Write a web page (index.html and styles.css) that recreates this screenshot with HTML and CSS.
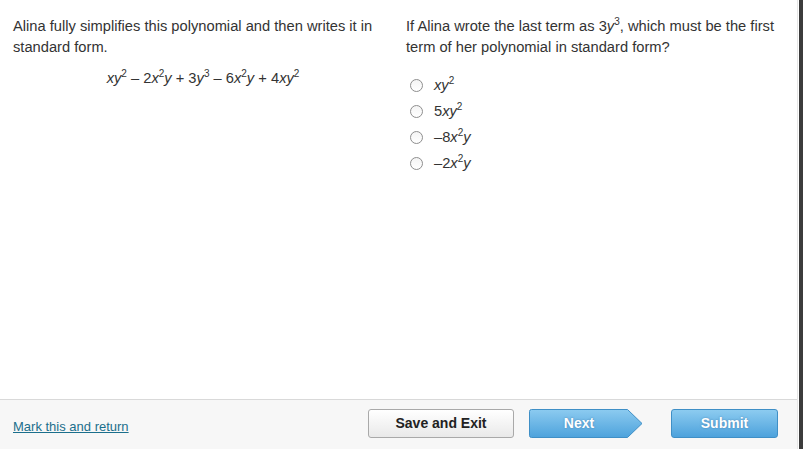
FILE: index.html
```html
<!DOCTYPE html>
<html>
<head>
<meta charset="utf-8">
<link rel="stylesheet" href="styles.css">
</head>
<body>
<div class="frame">
  <div class="page">
    <main class="content">
      <section class="col col-left">
        <p class="prompt">Alina fully simplifies this polynomial and then writes it in standard form.</p>
        <p class="formula"><i>xy</i><sup>2</sup> – 2<i>x</i><sup>2</sup><i>y</i> + 3<i>y</i><sup>3</sup> – 6<i>x</i><sup>2</sup><i>y</i> + 4<i>xy</i><sup>2</sup></p>
      </section>
      <section class="col col-right">
        <p class="prompt">If Alina wrote the last term as 3<i>y</i><sup>3</sup>, which must be the first term of her polynomial in standard form?</p>
        <ul class="choices">
          <li class="choice"><span class="radio"></span><span class="label"><i>xy</i><sup>2</sup></span></li>
          <li class="choice"><span class="radio"></span><span class="label">5<i>xy</i><sup>2</sup></span></li>
          <li class="choice"><span class="radio"></span><span class="label">–8<i>x</i><sup>2</sup><i>y</i></span></li>
          <li class="choice"><span class="radio"></span><span class="label">–2<i>x</i><sup>2</sup><i>y</i></span></li>
        </ul>
      </section>
    </main>
    <footer class="footer">
      <a class="mark" href="#">Mark this and return</a>
      <div class="actions">
        <button class="btn btn-save">Save and Exit</button>
        <button class="btn-next">
          <svg class="next-shape" width="114" height="29" viewBox="0 0 114 29">
            <defs>
              <linearGradient id="ng" x1="0" y1="0" x2="0" y2="1">
                <stop offset="0" stop-color="#8ccbf0"/>
                <stop offset="1" stop-color="#4da2dc"/>
              </linearGradient>
            </defs>
            <path d="M2.5 0.5 H98.5 L113 14.5 L98.5 28.5 H2.5 Q0.5 28.5 0.5 26.5 V2.5 Q0.5 0.5 2.5 0.5 Z" fill="url(#ng)" stroke="#3f8fc6" stroke-width="1"/>
          </svg>
          <span class="next-text">Next</span>
        </button>
        <button class="btn btn-submit">Submit</button>
      </div>
    </footer>
  </div>
  <div class="edge"></div>
</div>
</body>
</html>
```
FILE: styles.css
```css
html, body {
  margin: 0;
  padding: 0;
  background: #ffffff;
}
body {
  font-family: "Liberation Sans", Arial, sans-serif;
  color: #333333;
  width: 803px;
  height: 449px;
  overflow: hidden;
}
.frame {
  display: flex;
  height: 449px;
}
.page {
  flex: 1;
  display: flex;
  flex-direction: column;
  border-right: 1px solid #e6e6e6;
  margin-right: 1px;
}
.edge {
  width: 4px;
  background: #3c3c3c;
}
.content {
  flex: 1;
  display: flex;
}
.col {
  padding-top: 16px;
}
.col-left {
  width: 380px;
  padding-left: 13px;
}
.col-right {
  padding-left: 13px;
  flex: 1;
}
.prompt {
  margin: 0;
  font-size: 14.7px;
  line-height: 21px;
}
sup {
  font-size: 10px;
  line-height: 0;
  vertical-align: 6px;
}
.formula {
  margin: 10px 0 0;
  font-size: 14.7px;
  line-height: 21px;
  text-align: center;
}
.choices {
  list-style: none;
  margin: 14px 0 0;
  padding: 0 0 0 4px;
}
.choice {
  display: flex;
  align-items: center;
  height: 26px;
  font-size: 14.7px;
}
.radio {
  width: 11px;
  height: 11px;
  border: 1px solid #8e8e8e;
  border-radius: 50%;
  background: linear-gradient(#f4f4f4, #ffffff);
  margin-right: 11px;
  flex: none;
}
.footer {
  height: 49px;
  border-top: 1px solid #d9d9d9;
  background: #f7f7f7;
  display: flex;
  align-items: center;
}
.mark {
  margin-left: 13px;
  margin-top: 4px;
  font-size: 13px;
  color: #1b6f8c;
  text-decoration: underline;
}
.actions {
  margin-left: auto;
  margin-right: 19px;
  display: flex;
  align-items: center;
  margin-top: -3px;
}
.btn {
  height: 29px;
  border-radius: 3px;
  font-family: "Liberation Sans", Arial, sans-serif;
  font-size: 14px;
  font-weight: bold;
  padding: 0;
}
.btn-save {
  width: 146px;
  border: 1px solid #a9a9a9;
  background: linear-gradient(#ffffff, #e9e9e9);
  color: #222222;
}
.btn-next {
  position: relative;
  width: 114px;
  height: 29px;
  margin-left: 15px;
  border: none;
  background: transparent;
  padding: 0;
}
.next-shape {
  position: absolute;
  left: 0;
  top: 0;
}
.next-text {
  position: relative;
  display: block;
  width: 100px;
  text-align: center;
  color: #ffffff;
  font-family: "Liberation Sans", Arial, sans-serif;
  font-size: 14px;
  font-weight: bold;
  text-shadow: 0 0 2px rgba(40, 90, 140, 0.6);
}
.btn-submit {
  width: 107px;
  margin-left: 28px;
  border: 1px solid #3f8fc6;
  background: linear-gradient(#8ccbf0, #4da2dc);
  color: #ffffff;
  text-shadow: 0 0 2px rgba(40, 90, 140, 0.6);
}
```
